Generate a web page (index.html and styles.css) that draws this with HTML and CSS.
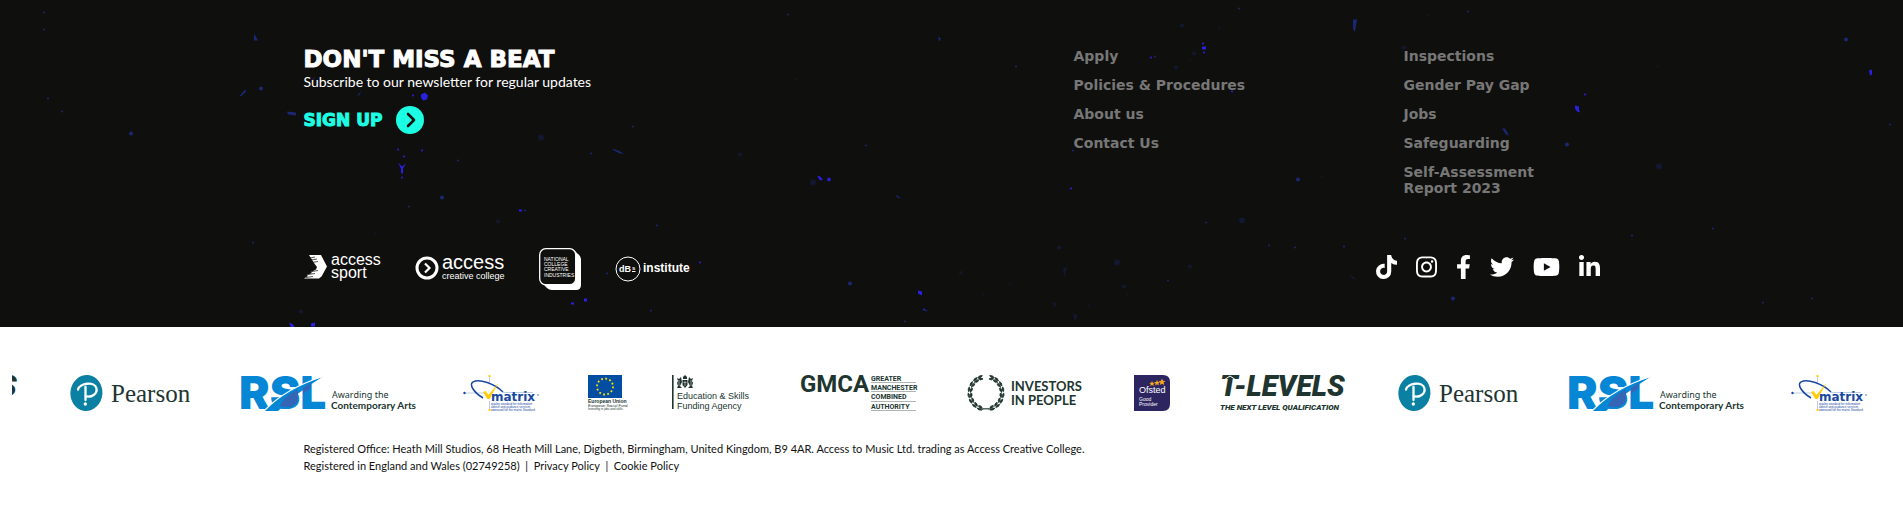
FILE: index.html
```html
<!DOCTYPE html>
<html lang="en">
<head>
<meta charset="utf-8">
<title>Access Creative College</title>
<link rel="stylesheet" href="styles.css">
</head>
<body>
<footer class="footer">
  <svg class="splatter" viewBox="0 0 1903 328" preserveAspectRatio="xMidYMid slice" aria-hidden="true">
    <g class="speck-bright">
      <path d="M421 95l4-2 3 3-1 4-4 1-2-3zM398 163l4 4 4-3-3 5 0 5-2 0 0-5zM817 176l3 1 3 3-3 1zM827 179l3-1 1 3-3 1zM1202 47h4v3h-4zM1575 106l4 1 0 3 1 3-3-1-2-3zM1869 71l3-1 0 5-2 1zM918 291l4 1 0 4-2-1-2-1zM289 323l4 2 2 3h-4zM311 324l4-1 0 4h-4zM584 299h3v3h-3zM571 303h3v2h-3zM519 210h3v2h-3z"/>
      <circle cx="413" cy="96" r="1"/><circle cx="398" cy="150" r="1"/><circle cx="404" cy="157" r="1"/><circle cx="422" cy="151" r="1"/><circle cx="402" cy="178" r="1"/><circle cx="1203" cy="44" r="1"/><circle cx="1204" cy="53" r="1"/><circle cx="1151" cy="58" r="1"/><circle cx="1585" cy="95" r="1"/><circle cx="1232" cy="92" r="1"/><circle cx="700" cy="263" r="1"/><circle cx="1071" cy="189" r="1"/><circle cx="924" cy="310" r="1"/>
    </g>
    <g class="speck-mid">
      <path d="M254 34l4 7-4 0zM240 96l5-6 1 2-5 5zM357 96l5-5-3 5zM312 80l3-3-2 4zM287 112l9 1 0 3-8-1zM612 149l6 2 6 3-4 0-6-3zM1353 20l4 0-2 12-2-2zM1502 129l3 0 4 7-3-1zM1350 276l7 4-5-2zM938 37l3 2-2 3zM896 195l5 4-4-1z"/>
      <circle cx="44" cy="13" r="1"/><circle cx="44" cy="30" r="1"/><circle cx="261" cy="89" r="2"/><circle cx="48" cy="99" r="1"/><circle cx="62" cy="112" r="1"/><circle cx="131" cy="134" r="2"/><circle cx="788" cy="15" r="1"/><circle cx="633" cy="127" r="1"/><circle cx="458" cy="161" r="1"/><circle cx="591" cy="154" r="1"/><circle cx="866" cy="146" r="1"/><circle cx="442" cy="198" r="2"/><circle cx="409" cy="207" r="1"/><circle cx="525" cy="211" r="1"/><circle cx="657" cy="226" r="1"/><circle cx="253" cy="243" r="1"/><circle cx="850" cy="284" r="2"/><circle cx="607" cy="274" r="1"/><circle cx="651" cy="311" r="1"/><circle cx="926" cy="311" r="1"/><circle cx="905" cy="322" r="1"/><circle cx="1468" cy="12" r="1"/><circle cx="1239" cy="9" r="1"/><circle cx="1155" cy="57" r="1"/><circle cx="1846" cy="40" r="2"/><circle cx="1016" cy="67" r="1"/><circle cx="1567" cy="145" r="2"/><circle cx="1298" cy="180" r="2"/><circle cx="1073" cy="151" r="1"/><circle cx="1206" cy="223" r="1"/><circle cx="1269" cy="246" r="1"/><circle cx="1295" cy="248" r="1"/><circle cx="1344" cy="247" r="1"/><circle cx="1405" cy="239" r="1"/><circle cx="1632" cy="236" r="1"/><circle cx="1713" cy="229" r="1"/><circle cx="1453" cy="299" r="2"/><circle cx="1168" cy="281" r="1"/><circle cx="1812" cy="299" r="1"/><circle cx="1763" cy="303" r="1"/><circle cx="1890" cy="125" r="1"/>
    </g>
    <g class="speck-dim">
      <circle cx="541" cy="138" r="3"/><circle cx="740" cy="155" r="2"/><circle cx="813" cy="183" r="3"/><circle cx="498" cy="222" r="2"/><circle cx="375" cy="234" r="1"/><circle cx="301" cy="312" r="2"/><circle cx="796" cy="80" r="1"/><circle cx="1194" cy="54" r="2"/><circle cx="1190" cy="61" r="1"/><circle cx="1176" cy="68" r="2"/><circle cx="1219" cy="28" r="1"/><circle cx="1182" cy="26" r="2"/><circle cx="1404" cy="48" r="2"/><circle cx="1428" cy="16" r="1"/><circle cx="1659" cy="167" r="3"/><circle cx="1322" cy="177" r="1"/><circle cx="1242" cy="221" r="3"/><circle cx="1117" cy="263" r="3"/><path d="M1063 268l4 0-3 10zM958 276l4-6 0 4zM1073 314l5 2-3 6zM1052 302l5 2-2 4z"/><circle cx="1059" cy="248" r="2"/><circle cx="983" cy="295" r="1"/><circle cx="1010" cy="284" r="1"/><circle cx="1089" cy="306" r="1"/><circle cx="1124" cy="287" r="2"/><circle cx="1127" cy="295" r="1"/><circle cx="1190" cy="267" r="2"/><circle cx="1658" cy="67" r="1"/>
    </g>
  </svg>
  <div class="container footer-body">
    <div class="columns">
      <section class="newsletter">
        <h2 class="newsletter-title">DON'T MISS A BEAT</h2>
        <p class="newsletter-text">Subscribe to our newsletter for regular updates</p>
        <a class="signup" href="#signup">SIGN UP
          <svg width="28" height="28" viewBox="0 0 28 28" aria-hidden="true"><circle cx="14" cy="14" r="14" fill="#1cffe4"/><path d="M12 8l6 6-6 6" fill="none" stroke="#0f0f0d" stroke-width="2.600" stroke-linecap="round" stroke-linejoin="round"/></svg>
        </a>
      </section>
      <ul class="links">
        <li><a href="#apply">Apply</a></li>
        <li><a href="#policies">Policies &amp; Procedures</a></li>
        <li><a href="#about">About us</a></li>
        <li><a href="#contact">Contact Us</a></li>
      </ul>
      <ul class="links">
        <li><a href="#inspections">Inspections</a></li>
        <li><a href="#pay-gap">Gender Pay Gap</a></li>
        <li><a href="#jobs">Jobs</a></li>
        <li><a href="#safeguarding">Safeguarding</a></li>
        <li><a href="#report">Self-Assessment<br>Report 2023</a></li>
      </ul>
    </div>
    <div class="brand-row">
      <div class="brands">
        <a href="#sport"><svg class="white" width="77" height="30" viewBox="0 0 77 30"><path d="M5 1H17L23 12.500 17.500 22.500 15 24.500H0L4 22 3 21 8 19 7 18 12 15.500 13 13 10 9z"/><path d="M6 4l5-1M7 6l6-1M8 8.500l6-1M2 23.500l7-1M4 20.500l7-1M8 17.500l6-1" stroke="#0f0f0d" stroke-width=".7"/><text class="helv t16" x="27" y="11">access</text><text class="helv t16" x="27" y="24">sport</text></svg></a>
        <a href="#college"><svg class="white" width="90" height="28" viewBox="0 0 90 28"><circle cx="12" cy="13" r="10" fill="none" stroke="#fff" stroke-width="3"/><path d="M10 8.500l4.500 4.500-4.500 4.500" fill="none" stroke="#fff" stroke-width="2.200"/><text class="helv t20" x="27" y="14">access</text><text class="helv t9" x="27" y="24">creative college</text></svg></a>
        <a href="#ncci"><svg class="white" width="42" height="42" viewBox="0 0 42 42"><path d="M36 3l3 3q3 2 3 5v26q0 5-5 5H13q-3 0-5-2l-4-4z"/><rect x=".7" y=".7" width="36" height="36" rx="6" fill="#0f0f0d" stroke="#fff" stroke-width="1.300"/><g class="helv t5"><text x="5" y="13">NATIONAL</text><text x="5" y="18">COLLEGE</text><text x="5" y="23">CREATIVE</text><text x="5" y="29">INDUSTRIES</text></g></svg></a>
        <a href="#dbs"><svg class="white" width="76" height="28" viewBox="0 0 76 28"><circle cx="13" cy="14" r="12" fill="none" stroke="#fff" stroke-width="1"/><text class="helv b t9" x="4" y="17">dB</text><text class="helv b t6" x="17" y="15">s</text><path d="M17 16.500h3.500" stroke="#fff"/><text class="helv b t12" x="28" y="17">institute</text></svg></a>
      </div>
      <nav class="social" aria-label="Social media">
        <a href="#tiktok" aria-label="TikTok"><svg class="white" width="21" height="24" viewBox="0 0 448 512"><path d="M448 209.900a210.100 210.100 0 0 1-122.800-39.300V349.400A162.600 162.600 0 1 1 185 188.300V278.200a74.600 74.600 0 1 0 52.200 71.200V0l88 0a121.200 121.200 0 0 0 1.900 22.200h0A122.200 122.200 0 0 0 381 102.400a121.400 121.400 0 0 0 67 20.100z"/></svg></a>
        <a href="#instagram" aria-label="Instagram"><svg class="white" width="21" height="24" viewBox="0 0 448 512"><path d="M224.100 141c-63.600 0-114.900 51.300-114.900 114.900s51.300 114.900 114.900 114.900S339 319.500 339 255.900 287.700 141 224.100 141zm0 189.600c-41.100 0-74.700-33.500-74.700-74.700s33.500-74.700 74.700-74.700 74.700 33.500 74.700 74.700-33.600 74.700-74.700 74.700zm146.400-194.300c0 14.900-12 26.800-26.800 26.800-14.900 0-26.800-12-26.800-26.800s12-26.800 26.800-26.800 26.800 12 26.800 26.800zm76.100 27.200c-1.700-35.900-9.900-67.700-36.200-93.900-26.200-26.200-58-34.400-93.900-36.200-37-2.100-147.900-2.100-184.900 0-35.800 1.700-67.600 9.900-93.900 36.100s-34.400 58-36.200 93.900c-2.100 37-2.100 147.900 0 184.900 1.700 35.900 9.900 67.700 36.200 93.900s58 34.400 93.900 36.200c37 2.100 147.900 2.100 184.900 0 35.900-1.700 67.700-9.900 93.900-36.200 26.200-26.200 34.400-58 36.200-93.900 2.100-37 2.100-147.800 0-184.800zM398.800 388c-7.800 19.600-22.900 34.700-42.600 42.600-29.500 11.700-99.500 9-132.100 9s-102.700 2.600-132.100-9c-19.600-7.800-34.700-22.900-42.600-42.600-11.700-29.500-9-99.500-9-132.100s-2.600-102.700 9-132.100c7.800-19.600 22.900-34.700 42.600-42.600 29.500-11.700 99.500-9 132.100-9s102.700-2.600 132.100 9c19.600 7.800 34.700 22.900 42.600 42.600 11.700 29.500 9 99.500 9 132.100s2.700 102.700-9 132.100z"/></svg></a>
        <a href="#facebook" aria-label="Facebook"><svg class="white" width="15" height="24" viewBox="0 0 320 512"><path d="M279.140 288l14.220-92.660h-88.910v-60.130c0-25.350 12.420-50.060 52.240-50.060h40.420V6.260S260.430 0 225.360 0c-73.220 0-121.080 44.380-121.080 124.720v70.620H22.890V288h81.390v224h100.170V288z"/></svg></a>
        <a href="#twitter" aria-label="Twitter"><svg class="white" width="24" height="24" viewBox="0 0 512 512"><path d="M459.370 151.716c.325 4.548.325 9.097.325 13.645 0 138.720-105.583 298.558-298.558 298.558-59.452 0-114.680-17.219-161.137-47.106 8.447.974 16.568 1.299 25.340 1.299 49.055 0 94.213-16.568 130.274-44.832-46.132-.975-84.792-31.188-98.112-72.772 6.498.974 12.995 1.624 19.818 1.624 9.421 0 18.843-1.300 27.614-3.573-48.081-9.747-84.143-51.980-84.143-102.985v-1.299c13.969 7.797 30.214 12.670 47.431 13.319-28.264-18.843-46.781-51.005-46.781-87.391 0-19.492 5.197-37.360 14.294-52.954 51.655 63.675 129.300 105.258 216.365 109.807-1.624-7.797-2.599-15.918-2.599-24.040 0-57.828 46.782-104.934 104.934-104.934 30.213 0 57.502 12.670 76.670 33.137 23.715-4.548 46.456-13.320 66.599-25.340-7.798 24.366-24.366 44.833-46.132 57.827 21.117-2.273 41.584-8.122 60.426-16.243-14.292 20.791-32.161 39.308-52.628 54.253z"/></svg></a>
        <a href="#youtube" aria-label="YouTube"><svg class="white" width="27" height="24" viewBox="0 0 576 512"><path d="M549.655 124.083c-6.281-23.650-24.787-42.276-48.284-48.597C458.781 64 288 64 288 64S117.220 64 74.629 75.486c-23.497 6.322-42.003 24.947-48.284 48.597-11.412 42.867-11.412 132.305-11.412 132.305s0 89.438 11.412 132.305c6.281 23.650 24.787 41.500 48.284 47.821C117.220 448 288 448 288 448s170.780 0 213.371-11.486c23.497-6.321 42.003-24.171 48.284-47.821 11.412-42.867 11.412-132.305 11.412-132.305s0-89.438-11.412-132.305zm-317.510 213.508V175.185l142.739 81.205-142.739 81.201z"/></svg></a>
        <a href="#linkedin" aria-label="LinkedIn"><svg class="white" width="21" height="24" viewBox="0 0 448 512"><path d="M100.280 448H7.400V148.900h92.880zM53.790 108.100C24.090 108.100 0 83.500 0 53.800a53.790 53.790 0 0 1 107.580 0c0 29.700-24.100 54.300-53.790 54.300zM447.900 448h-92.680V302.400c0-34.700-.7-79.200-48.290-79.200-48.290 0-55.690 37.700-55.690 76.700V448h-92.780V148.900h89.080v40.800h1.300c12.400-23.500 42.690-48.300 87.880-48.300 94 0 111.280 61.900 111.280 142.300V448z"/></svg></a>
      </nav>
    </div>
  </div>
</footer>

<div class="partners">
  <div class="track">
    <svg width="128" height="36" viewBox="0 0 128 36"><g fill="#20352f"><text class="rob bi t29" x="0" y="21">T-LEVELS</text><text class="rob bi t8" x="0" y="35">THE NEXT LEVEL QUALIFICATION</text></g></svg>

    <svg width="120" height="36" viewBox="0 0 120 36"><ellipse cx="16.400" cy="18" rx="16" ry="18" fill="#0a80a3" transform="rotate(6 16.400 18)"/><path d="M8 14.500C9 8.500 25 5.500 26.500 13.500C27.500 19.500 21 22 17.500 21.500M15.500 12v13" fill="none" stroke="#fff" stroke-width="2.300" stroke-linecap="round"/><circle cx="15.300" cy="29" r="1.700" fill="#fff"/><text class="serif t25" x="41" y="27" fill="#20352f">Pearson</text></svg>

    <svg width="173" height="36" viewBox="0 0 173 36"><text class="inter t46" x="-1" y="34" fill="#0587d6">RSL</text><path d="M24 36Q46 13 83 1.500Q55 19 38 36z" fill="#0587d6"/><path d="M24 36Q46 13 83 1.500" fill="none" stroke="#fff" stroke-width="1.300"/><path d="M44 24Q50 18 58 15L58 25Q55 33 45 32L40 31z" fill="#3565b5"/><path d="M63 13l8-5v5l-8 6z" fill="#3565b5"/><g fill="#20352f"><text class="noto t9" x="92" y="23">Awarding the</text><text class="latin b t10" x="91" y="34">Contemporary Arts</text></g></svg>

    <svg width="75" height="36" viewBox="0 0 75 36"><path d="M1 18h20M26.500 0v8M26.500 26v10M40 17.500h30" stroke="#9db8dc" stroke-width=".7"/><path d="M20 23C10 17 6 9 10 7C16 3 32 9 40 17" fill="none" stroke="#17479e" stroke-width="1.500"/><path d="M20 17l2.500-1 3 4 10-12-9 16h-2z" fill="#fc0"/><path d="M25.500 0h2v2h-2zM25.500 34h2v2h-2z" fill="#fc0"/><circle cx="1.500" cy="18" r="1.200" fill="#17479e"/><g fill="#17479e"><text class="deja t12" x="28" y="26">matrix</text><circle cx="75" cy="20" r=".7"/><g class="helv t3"><text x="28" y="30">quality standard for information</text><text x="28" y="33">advice and guidance services</text><text x="28" y="36">approved for the matrix Standard</text></g></g></svg>

    <svg width="34" height="36" viewBox="0 0 34 36"><path d="M0 0h34v23H0z" fill="#034ea2"/><circle cx="17" cy="11.500" r="8" fill="none" stroke="#ffe200" stroke-width="1.800" stroke-dasharray="1.800 2.389"/><g fill="#20352f"><text class="helv b t5" x="0" y="28">European Union</text><text class="helv t4" x="0" y="32">European Social Fund</text><text class="helv t3" x="0" y="35">Investing in jobs and skills</text></g></svg>

    <svg width="78" height="36" viewBox="0 0 78 36"><g fill="#20352f"><path d="M0 0h1.600v34H0zM11 2l2-2 2 2v2h-4zM5 3l2 1 2-2 1 5-2 4 2 2H5l1-2-1-3 1-2zM21 3l-2 1-2-2-1 5 2 4-2 2h5l-1-2 1-3-1-2zM10.500 5h5v5l-2.500 3-2.500-3z"/><text class="helv t9" x="5" y="24">Education &amp; Skills</text><text class="helv t9" x="5" y="34">Funding Agency</text></g><path d="M11.500 7.500h3M13 6v5M7 5v6M19 5v6" stroke="#fff" stroke-width=".5"/></svg>

    <svg width="116" height="36" viewBox="0 0 116 36"><g fill="#20352f"><text class="rob b t24" x="0" y="17">GMCA</text><g class="rob b t7"><text x="71" y="6">GREATER</text><text x="71" y="15">MANCHESTER</text><text x="71" y="24">COMBINED</text><text x="71" y="34">AUTHORITY</text></g></g><path d="M71 7.500h45M71 16.500h45M71 26.500h45M71 35.500h45" stroke="#8b9692" stroke-width=".7"/></svg>

    <svg width="118" height="36" viewBox="0 0 118 36">
      <defs>
        <g id="sprig"><path d="M0-17.500q3-1.500 5 .5q-3 1.800-5-.5zM0-16q3-.2 4 2.200q-3.300.6-4-2.200z"/></g>
        <g id="branch"><use href="#sprig" transform="rotate(-166)"/><use href="#sprig" transform="rotate(-146)"/><use href="#sprig" transform="rotate(-126)"/><use href="#sprig" transform="rotate(-106)"/><use href="#sprig" transform="rotate(-86)"/><use href="#sprig" transform="rotate(-66)"/><use href="#sprig" transform="rotate(-46)"/><use href="#sprig" transform="rotate(-28)"/></g>
      </defs>
      <g fill="#20352f" stroke="#20352f" stroke-width=".7"><use href="#branch" transform="translate(20 18)"/><use href="#branch" transform="translate(20 18) scale(-1 1)"/><path d="M15 35q5-3 10 0" fill="none"/><path d="M14 3A16.200 16.200 0 0 0 20 34A16.200 16.200 0 0 0 26 3" fill="none"/></g>
      <g fill="#20352f" class="latin b t13"><text x="45" y="16">INVESTORS</text><text x="45" y="30">IN PEOPLE</text></g></svg>

    <svg width="36" height="36" viewBox="0 0 36 36"><path d="M0 0h29q7 0 7 7v22q0 7-7 7H0z" fill="#2d2560"/><g fill="#fff"><text class="helv t9" x="5" y="18">Ofsted</text><text class="helv t5" x="5" y="26">Good</text><text class="helv t5" x="5" y="31">Provider</text></g><path d="M18 6l.8 1.800 2 .1-1.500 1.200.5 2-1.800-1.100-1.700 1.100.4-2L15.200 8l2-.2zM23 5l.9 2 2.100.1-1.600 1.300.5 2.100L23 9.300l-1.900 1.200.5-2.100L20 7.100l2.100-.1zM28 3.500l1 2.300 2.500.2-1.900 1.600.6 2.400L28 8.700 25.800 10l.6-2.400L24.500 6l2.500-.2z" fill="#f5a623"/></svg>

    <svg width="128" height="36" viewBox="0 0 128 36"><g fill="#20352f"><text class="rob bi t29" x="0" y="21">T-LEVELS</text><text class="rob bi t8" x="0" y="35">THE NEXT LEVEL QUALIFICATION</text></g><path d="M4 5l6-4 6 4" fill="none" stroke="#fff"/></svg>

    <svg width="120" height="36" viewBox="0 0 120 36"><ellipse cx="16.400" cy="18" rx="16" ry="18" fill="#0a80a3" transform="rotate(6 16.400 18)"/><path d="M8 14.500C9 8.500 25 5.500 26.500 13.500C27.500 19.500 21 22 17.500 21.500M15.500 12v13" fill="none" stroke="#fff" stroke-width="2.300" stroke-linecap="round"/><circle cx="15.300" cy="29" r="1.700" fill="#fff"/><text class="serif t25" x="41" y="27" fill="#20352f">Pearson</text></svg>

    <svg width="173" height="36" viewBox="0 0 173 36"><text class="inter t46" x="-1" y="34" fill="#0587d6">RSL</text><path d="M24 36Q46 13 83 1.500Q55 19 38 36z" fill="#0587d6"/><path d="M24 36Q46 13 83 1.500" fill="none" stroke="#fff" stroke-width="1.300"/><path d="M44 24Q50 18 58 15L58 25Q55 33 45 32L40 31z" fill="#3565b5"/><path d="M63 13l8-5v5l-8 6z" fill="#3565b5"/><g fill="#20352f"><text class="noto t9" x="92" y="23">Awarding the</text><text class="latin b t10" x="91" y="34">Contemporary Arts</text></g></svg>

    <svg width="75" height="36" viewBox="0 0 75 36"><path d="M1 18h20M26.500 0v8M26.500 26v10M40 17.500h30" stroke="#9db8dc" stroke-width=".7"/><path d="M20 23C10 17 6 9 10 7C16 3 32 9 40 17" fill="none" stroke="#17479e" stroke-width="1.500"/><path d="M20 17l2.500-1 3 4 10-12-9 16h-2z" fill="#fc0"/><path d="M25.500 0h2v2h-2zM25.500 34h2v2h-2z" fill="#fc0"/><circle cx="1.500" cy="18" r="1.200" fill="#17479e"/><g fill="#17479e"><text class="deja t12" x="28" y="26">matrix</text><circle cx="75" cy="20" r=".7"/><g class="helv t3"><text x="28" y="30">quality standard for information</text><text x="28" y="33">advice and guidance services</text><text x="28" y="36">approved for the matrix Standard</text></g></g></svg>
  </div>
</div>

<div class="container legal">
  <p>Registered Office: Heath Mill Studios, 68 Heath Mill Lane, Digbeth, Birmingham, United Kingdom, B9 4AR. Access to Music Ltd. trading as Access Creative College.</p>
  <p>Registered in England and Wales (02749258) &nbsp;|&nbsp; <a href="#privacy">Privacy Policy</a> &nbsp;|&nbsp; <a href="#cookies">Cookie Policy</a></p>
</div>
</body>
</html>
```
FILE: styles.css
```css
* { box-sizing: border-box; }

body {
  margin: 0;
  background: #fff;
  color: #111;
  font-family: Lato, sans-serif;
}

h2, p, ul { margin: 0; padding: 0; }
ul { list-style: none; }
a { color: inherit; text-decoration: none; }
svg { display: block; overflow: visible; }

.container {
  max-width: 1320px;
  margin: 0 auto;
  padding: 0 12px;
}

.footer {
  position: relative;
  background: #0f0f0d;
  color: #fff;
}

.splatter {
  position: absolute;
  inset: 0;
  width: 100%;
  height: 100%;
  overflow: hidden;
}
.speck-bright { fill: #2a20e0; }
.speck-mid { fill: #1a2874; }
.speck-dim { fill: #121830; }

.footer-body {
  position: relative;
  padding-top: 48px;
  padding-bottom: 37px;
}

.columns {
  display: grid;
  grid-template-columns: 7fr 3fr 2fr;
  margin: 0 -12px;
}
.columns > * { padding: 0 12px; }

.newsletter-title {
  font: bold 23px/22px "DejaVu Sans", sans-serif;
  -webkit-text-stroke: 1px currentColor;
}
.newsletter-text {
  font-size: 14px;
  line-height: 24px;
}
.signup {
  display: inline-flex;
  align-items: center;
  gap: 14px;
  margin-top: 12px;
  color: #1cffe4;
  font: bold 17px/28px "DejaVu Sans", sans-serif;
  -webkit-text-stroke: 1px currentColor;
}

.links {
  display: flex;
  flex-direction: column;
  gap: 13px;
  color: #777;
  font: bold 14px/16px "DejaVu Sans", sans-serif;
}

.brand-row {
  display: flex;
  justify-content: space-between;
  align-items: center;
  margin-top: 52px;
}
.brands {
  display: flex;
  align-items: center;
  gap: 34px;
}
.social {
  display: flex;
  align-items: center;
  gap: 19px;
  padding-bottom: 4px;
}

.white { fill: #fff; }

.partners {
  margin: 48px 12px 0;
  overflow: hidden;
}
.track {
  display: flex;
  gap: 50px;
  margin-left: -120px;
}
.track svg { flex: none; }

.helv { font-family: "Liberation Sans", sans-serif; }
.rob { font-family: Roboto, sans-serif; }
.noto { font-family: "Noto Sans", sans-serif; }
.latin { font-family: Lato, sans-serif; }
.serif { font-family: "Liberation Serif", serif; }
.deja { font-family: "DejaVu Sans", sans-serif; font-weight: bold; }
.inter { font-family: Inter, sans-serif; font-weight: 900; }
.b { font-weight: bold; }
.bi { font-weight: 900; font-style: italic; }
.t3 { font-size: 3px; }
.t4 { font-size: 4px; }
.t5 { font-size: 5px; }
.t6 { font-size: 6px; }
.t7 { font-size: 7px; }
.t8 { font-size: 8px; }
.t9 { font-size: 9px; }
.t10 { font-size: 10px; }
.t12 { font-size: 12px; }
.t13 { font-size: 13px; }
.t16 { font-size: 16px; }
.t20 { font-size: 20px; }
.t24 { font-size: 24px; }
.t25 { font-size: 25px; }
.t29 { font-size: 29px; }
.t46 { font-size: 46px; }

.legal {
  padding-top: 29px;
  padding-bottom: 16px;
  font-size: 11px;
  line-height: 17px;
}
```
